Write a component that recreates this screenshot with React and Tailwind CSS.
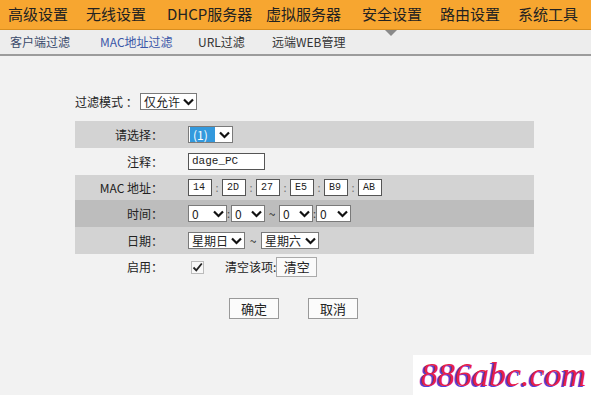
import React from "react";

const menu = [
  { label: "高级设置", w: "w-[78px]" },
  { label: "无线设置", w: "w-[81px]" },
  { label: "DHCP服务器", w: "w-[99px]" },
  { label: "虚拟服务器", w: "w-[96px]" },
  { label: "安全设置", w: "w-[78px]" },
  { label: "路由设置", w: "w-[78px]" },
  { label: "系统工具", w: "w-[73px]" },
];

const tabs = [
  { label: "客户端过滤", w: "w-[90px]", c: "text-[#3a4a6a]" },
  { label: "MAC地址过滤", w: "w-[98px]", c: "text-[#3b57a8]" },
  { label: "URL过滤", w: "w-[74px]", c: "text-[#333]" },
  { label: "远端WEB管理", w: "w-[90px]", c: "text-[#333]" },
];

const font = "font-['Noto_Sans_CJK_SC','Liberation_Sans',sans-serif]";

function Chevron() {
  return (
    <svg width="11" height="8" viewBox="0 0 11 8">
      <path d="M1 1.5 L5.5 6 L10 1.5" fill="none" stroke="#111" strokeWidth="2.2" />
    </svg>
  );
}

function FakeSelect({ value, w, selected }) {
  return (
    <div className={`flex items-center h-[17px] border border-[#7a7a7a] bg-white ${w}`}>
      <span
        className={`flex-1 h-full flex items-center pl-[3px] text-[12px] leading-none ${
          selected ? "bg-[#3399dd] text-white m-[1px] h-[13px]" : "text-[#222]"
        }`}
      >
        {value}
      </span>
      <span className="w-[16px] flex items-center justify-center">
        <Chevron />
      </span>
    </div>
  );
}

function Box({ v, w = "w-[24px]" }) {
  return (
    <div className={`h-[17px] ${w} border border-[#555] bg-white flex items-center pl-[4px] text-[10px] font-['Liberation_Mono',monospace] text-[#222]`}>
      {v}
    </div>
  );
}

function Row({ label, bg, h, children }) {
  return (
    <div className={`flex items-center ${bg} ${h}`}>
      <div className="w-[90px] text-right text-[12px] text-[#222] pr-[2px]">{label}</div>
      <div className="pl-[23px] flex items-center">{children}</div>
    </div>
  );
}

function Colon() {
  return <span className="w-[10px] text-center text-[11px] text-[#777]">:</span>;
}

export default function App() {
  return (
    <div className={`w-[591px] h-[395px] bg-[#f2f2f2] overflow-hidden relative ${font}`}>
      {/* top menu */}
      <div className="h-[30px] bg-[#f7a630] border-b border-[#d98e1e] flex items-center pl-[8px]">
        {menu.map((m) => (
          <span key={m.label} className={`${m.w} text-[15px] text-[#222] whitespace-nowrap`}>
            {m.label}
          </span>
        ))}
      </div>

      {/* sub tabs */}
      <div className="relative h-[26px] bg-[#ededed] border-b-2 border-[#9c9c9c] flex items-center pl-[10px]">
        {tabs.map((t) => (
          <span key={t.label} className={`${t.w} text-[12px] ${t.c} whitespace-nowrap`}>
            {t.label}
          </span>
        ))}
        <div className="absolute left-[385px] top-0 w-0 h-0 border-l-[6px] border-r-[6px] border-t-[6px] border-l-transparent border-r-transparent border-t-[#8a8a8a]" />
      </div>

      {/* form */}
      <div className="pl-[75px] pt-[37px]">
        <div className="flex items-center h-[17px]">
          <span className="text-[12px] text-[#222] w-[65px]">过滤模式 ：</span>
          <FakeSelect value="仅允许" w="w-[57px]" />
        </div>

        <div className="mt-[11px] w-[459px]">
          <Row label="请选择：" bg="bg-[#d3d3d3]" h="h-[27px]">
            <FakeSelect value="(1)" w="w-[45px]" selected />
          </Row>
          <Row label="注释：" bg="bg-[#f2f2f2]" h="h-[27px]">
            <div className="h-[17px] w-[77px] border border-[#555] bg-white flex items-center pl-[3px] text-[11px] font-['Liberation_Mono',monospace] text-[#222]">
              dage_PC
            </div>
          </Row>
          <Row label="MAC 地址：" bg="bg-[#d3d3d3]" h="h-[25px]">
            <Box v="14" />
            <Colon />
            <Box v="2D" />
            <Colon />
            <Box v="27" />
            <Colon />
            <Box v="E5" />
            <Colon />
            <Box v="B9" />
            <Colon />
            <Box v="AB" />
          </Row>
          <Row label="时间：" bg="bg-[#bdbdbd]" h="h-[27px]">
            <FakeSelect value="0" w="w-[39px]" />
            <span className="w-[4px] text-[11px] text-[#444]">:</span>
            <FakeSelect value="0" w="w-[34px]" />
            <span className="w-[14px] text-center text-[12px] text-[#222]">~</span>
            <FakeSelect value="0" w="w-[34px]" />
            <span className="w-[3px] text-[11px] text-[#444]">:</span>
            <FakeSelect value="0" w="w-[35px]" />
          </Row>
          <Row label="日期：" bg="bg-[#d3d3d3]" h="h-[27px]">
            <FakeSelect value="星期日" w="w-[57px]" />
            <span className="w-[16px] text-center text-[12px] text-[#222]">~</span>
            <FakeSelect value="星期六" w="w-[58px]" />
          </Row>
          <Row label="启用：" bg="bg-transparent" h="h-[26px]">
            <div className="ml-[3px] w-[13px] h-[13px] border border-[#bbb] bg-[#f8f8f8] flex items-center justify-center">
              <svg width="11" height="11" viewBox="0 0 11 11">
                <path d="M1.5 5.5 L4.3 8.3 L9.8 1.5" fill="none" stroke="#222" strokeWidth="1.8" />
              </svg>
            </div>
            <span className="ml-[21px] text-[12px] text-[#222]">清空该项:</span>
            <span className="h-[20px] w-[41px] border border-[#aaa] bg-[#fafafa] flex items-center justify-center text-[13px] text-[#222]">
              清空
            </span>
          </Row>
        </div>

        <div className="flex mt-[18px] pl-[154px] gap-[29px]">
          <span className="h-[21px] w-[50px] border border-[#999] bg-[#fbfbfb] flex items-center justify-center text-[13px] text-[#222]">
            确定
          </span>
          <span className="h-[21px] w-[50px] border border-[#999] bg-[#fbfbfb] flex items-center justify-center text-[13px] text-[#222]">
            取消
          </span>
        </div>
      </div>

      {/* watermark */}
      <div className="absolute left-[413px] top-[355px] w-[178px] h-[40px] bg-white flex items-center pl-[8px]">
        <span className="font-['Liberation_Serif',serif] italic text-[34px] leading-none text-[#e8204a] [text-shadow:-2px_1px_0_#5a3fd8]">
          886abc.com
        </span>
      </div>
    </div>
  );
}
